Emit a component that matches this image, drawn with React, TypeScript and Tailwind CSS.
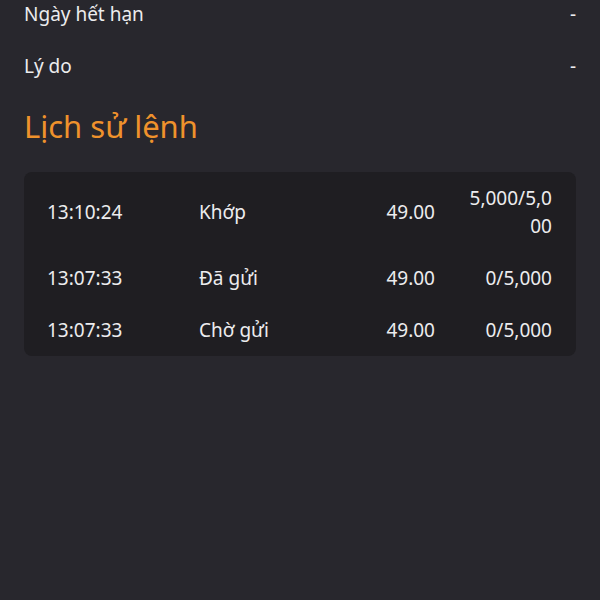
const INFO = [
  { label: 'Ngày hết hạn', value: '-' },
  { label: 'Lý do', value: '-' },
]

const HISTORY = [
  { time: '13:10:24', status: 'Khớp', price: '49.00', qty: '5,000/5,000' },
  { time: '13:07:33', status: 'Đã gửi', price: '49.00', qty: '0/5,000' },
  { time: '13:07:33', status: 'Chờ gửi', price: '49.00', qty: '0/5,000' },
]

export default function App() {
  return (
    <div
      className="w-[600px] h-[600px] overflow-hidden bg-[#28272d] text-[#ececee] px-6"
      style={{ fontFamily: '"Noto Sans", "Open Sans", sans-serif' }}
    >
      {/* Info rows */}
      <div className="flex flex-col -mt-[12px]">
        {INFO.map((row) => (
          <div key={row.label} className="flex items-center justify-between h-[52px] text-[19px]">
            <span>{row.label}</span>
            <span>{row.value}</span>
          </div>
        ))}
      </div>

      {/* Title */}
      <h2 className="mt-[12px] text-[31px] leading-[44px] text-[#ef922c]">Lịch sử lệnh</h2>

      {/* History table */}
      <div className="mt-[24px] rounded-lg bg-[#1f1e22]">
        {HISTORY.map((row, i) => (
          <div key={i} className="flex items-center py-3 text-[19px] leading-[28px]">
            <div className="w-[175px] pl-[23px]">{row.time}</div>
            <div className="w-[145px]">{row.status}</div>
            <div className="w-[91px] text-right">{row.price}</div>
            <div className="flex-1 flex justify-end pr-6">
              <span className="w-[90px] text-right break-all">{row.qty}</span>
            </div>
          </div>
        ))}
      </div>
    </div>
  )
}
